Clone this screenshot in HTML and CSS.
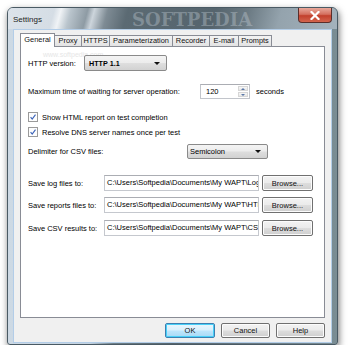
FILE: index.html
```html
<!DOCTYPE html>
<html>
<head>
<meta charset="utf-8">
<link rel="stylesheet" href="styles.css">
</head>
<body>
<div class="window">
	<div class="titlebar">
		<span class="title">Settings</span>
		<span class="watermark">SOFTPEDIA</span>
		<div class="close">
			<svg width="10" height="9" viewBox="0 0 10 9"><path d="M1.5 1 L8.5 8 M8.5 1 L1.5 8" stroke="#fff" stroke-width="2.2" stroke-linecap="square"/></svg>
		</div>
	</div>
	<div class="client">
		<ul class="tabs">
			<li class="tab active w-general">General</li>
			<li class="tab w-proxy">Proxy</li>
			<li class="tab w-https">HTTPS</li>
			<li class="tab w-param">Parameterization</li>
			<li class="tab w-rec">Recorder</li>
			<li class="tab w-mail">E-mail</li>
			<li class="tab w-prompts">Prompts</li>
		</ul>
		<div class="panel">
			<span class="site-mark">www.softpedia.com</span>
			<div class="row r-http">
				<span class="label l-http">HTTP version:</span>
				<div class="combo c-http"><span>HTTP 1.1</span><i class="arrow"></i></div>
			</div>
			<div class="row r-time">
				<span class="label l-time">Maximum time of waiting for server operation:</span>
				<div class="spin">
					<span class="spin-value">120</span>
					<div class="spin-btns">
						<i class="up"></i>
						<i class="down"></i>
					</div>
				</div>
				<span class="unit">seconds</span>
			</div>
			<div class="row check r-cb1">
				<svg class="cb" width="10" height="10" viewBox="0 0 10 10"><rect x="0.5" y="0.5" width="9" height="9" fill="#fdfdfd" stroke="#9a9a9a"/><path d="M2.6 5.2 L4.2 7.1 L7.5 2.7" fill="none" stroke="#3a62b8" stroke-width="1.1"/></svg>
				<span>Show HTML report on test completion</span>
			</div>
			<div class="row check r-cb2">
				<svg class="cb" width="10" height="10" viewBox="0 0 10 10"><rect x="0.5" y="0.5" width="9" height="9" fill="#fdfdfd" stroke="#9a9a9a"/><path d="M2.6 5.2 L4.2 7.1 L7.5 2.7" fill="none" stroke="#3a62b8" stroke-width="1.1"/></svg>
				<span>Resolve DNS server names once per test</span>
			</div>
			<div class="row r-delim">
				<span class="label l-delim">Delimiter for CSV files:</span>
				<div class="combo c-delim"><span>Semicolon</span><i class="arrow"></i></div>
			</div>
			<div class="row r-log">
				<span class="label l-save">Save log files to:</span>
				<div class="path">C:\Users\Softpedia\Documents\My WAPT\Log</div>
				<div class="btn browse">Browse...</div>
			</div>
			<div class="row r-rep">
				<span class="label l-save">Save reports files to:</span>
				<div class="path">C:\Users\Softpedia\Documents\My WAPT\HTM</div>
				<div class="btn browse">Browse...</div>
			</div>
			<div class="row r-csv">
				<span class="label l-save">Save CSV results to:</span>
				<div class="path">C:\Users\Softpedia\Documents\My WAPT\CSV</div>
				<div class="btn browse">Browse...</div>
			</div>
		</div>
		<div class="buttons">
			<div class="btn dlg default">OK</div>
			<div class="btn dlg">Cancel</div>
			<div class="btn dlg">Help</div>
		</div>
	</div>
</div>
</body>
</html>
```

FILE: styles.css
```css
* {
	margin: 0;
	padding: 0;
	box-sizing: border-box;
}

body {
	background: #fff;
	font-family: "Liberation Sans", Arial, sans-serif;
	font-size: 7.5px;
	color: #000;
}

.window {
	margin: 7px 0 0 7px;
	width: 331px;
	height: 338px;
	padding: 0 5px 2px 5px;
	border: 1px solid #4a5a64;
	border-radius: 6px 6px 3px 3px;
	background: linear-gradient(90deg, #cdd9e4 0%, #c4d3e0 25%, #6f8088 32%, #56656d 50%, #6c7c84 75%, #7a8d94 100%);
	box-shadow: 1px 3px 7px rgba(0, 0, 0, 0.55);
	position: relative;
}

.titlebar {
	height: 21px;
	display: flex;
	align-items: center;
	margin: 0 -5px;
	padding-left: 5px;
	border-radius: 5px 5px 0 0;
	background: linear-gradient(105deg, #dce3ea 0%, #d5dde5 14%, #f0f3f6 16%, #b9c4cc 19%, #8e9ba4 24%, #cdd5dc 26%, #7e8b94 30%, #5b6a73 36%, #55646d 62%, #6b7a83 72%, #94a3ad 82%, #a4b2bc 100%);
	position: relative;
	overflow: hidden;
}

.title {
	font-size: 8px;
	color: #1d1d1d;
	flex: 1;
	margin-top: 1px;
}

.watermark {
	position: absolute;
	left: 124px;
	top: 1px;
	font-family: "DejaVu Serif", serif;
	font-weight: bold;
	font-size: 18px;
	line-height: 21px;
	color: rgba(205, 214, 222, 0.35);
}

.close {
	width: 34px;
	height: 15px;
	margin: 0 5px auto 0;
	border: 1px solid #5b2e2a;
	border-top: none;
	border-radius: 0 0 4px 4px;
	background: linear-gradient(180deg, #e9a99b 0%, #d4705f 45%, #c2402c 55%, #d3654e 100%);
	display: flex;
	align-items: center;
	justify-content: center;
	position: relative;
	z-index: 1;
}

.client {
	height: 314px;
	border: 1px solid #b3cde8;
	background: #f0f0f0;
	padding: 3px 6px 4px 6px;
	display: flex;
	flex-direction: column;
}

.tabs {
	list-style-type: none;
	display: flex;
	align-items: flex-end;
	height: 13px;
	position: relative;
	z-index: 1;
}

.tab {
	height: 11px;
	border: 1px solid #898c95;
	border-bottom: none;
	margin-right: -1px;
	background: linear-gradient(180deg, #f3f3f3, #e3e3e3);
	text-align: center;
	line-height: 10px;
	color: #111;
	font-size: 7.4px;
}

.tab.active {
	height: 14px;
	margin-bottom: -1px;
	background: #fff;
	line-height: 12px;
	position: relative;
	z-index: 2;
}

.w-general { width: 35px; }
.w-proxy { width: 28px; }
.w-https { width: 29px; }
.w-param { width: 64px; }
.w-rec { width: 38px; }
.w-mail { width: 30px; }
.w-prompts { width: 34px; }

.panel {
	height: 272px;
	border: 1px solid #898c95;
	background: #fff;
	padding: 0 0 0 7px;
	position: relative;
}

.site-mark {
	position: absolute;
	left: 22px;
	top: 4px;
	color: #e6e6e6;
	font-size: 7px;
}

.row {
	display: flex;
	align-items: center;
	position: relative;
}

.label {
	flex: none;
}

.l-http { width: 56px; }
.l-time { width: 172px; }
.l-delim { width: 159px; }
.l-save { width: 76px; }

.r-http { margin-top: 8px; height: 16px; }
.r-time { margin-top: 13px; height: 15px; }
.r-cb1 { margin-top: 12px; height: 12px; }
.r-cb2 { margin-top: 3px; height: 12px; }
.r-delim { margin-top: 6px; height: 15px; }
.r-log { margin-top: 16px; height: 16px; }
.r-rep { margin-top: 6px; height: 16px; }
.r-csv { margin-top: 7px; height: 16px; }

.combo {
	height: 100%;
	border: 1px solid #8a8a8a;
	border-radius: 2px;
	background: linear-gradient(180deg, #f4f4f4 0%, #ececec 48%, #dedede 52%, #d2d2d2 100%);
	display: flex;
	align-items: center;
	padding: 0 6px 0 4px;
}

.combo span {
	flex: 1;
}

.c-http {
	width: 83px;
	font-weight: bold;
	font-size: 7.2px;
}

.c-delim {
	width: 81px;
	padding-left: 2px;
}

.arrow {
	width: 0;
	height: 0;
	border-left: 3px solid transparent;
	border-right: 3px solid transparent;
	border-top: 3px solid #111;
}

.spin {
	width: 50px;
	height: 100%;
	border: 1px solid #c2c5cb;
	border-top-color: #abadb3;
	display: flex;
	background: #fff;
}

.spin-value {
	flex: 1;
	padding-left: 5px;
	line-height: 13px;
}

.spin-btns {
	width: 11px;
	display: flex;
	flex-direction: column;
	gap: 1px;
	padding: 1px 1px 1px 0;
}

.spin-btns i {
	flex: 1;
	border: 1px solid #d6d6d6;
	background: linear-gradient(180deg, #f7f7f7, #e6e6e6);
	display: flex;
	align-items: center;
	justify-content: center;
}

.spin-btns i::after {
	content: "";
	border-left: 2px solid transparent;
	border-right: 2px solid transparent;
}

.spin-btns .up::after {
	border-bottom: 2px solid #5b78a8;
}

.spin-btns .down::after {
	border-top: 2px solid #5b78a8;
}

.unit {
	margin-left: 6px;
}

.check .cb {
	margin-right: 4px;
	flex: none;
}

.path {
	width: 155px;
	height: 100%;
	border: 1px solid #c5c8ce;
	border-top-color: #abadb3;
	background: #fff;
	padding: 0 2px;
	line-height: 14px;
	white-space: nowrap;
	overflow: hidden;
}

.btn {
	height: 100%;
	border: 1px solid #707070;
	border-radius: 2px;
	background: linear-gradient(180deg, #f3f3f3 0%, #ebebeb 48%, #dddddd 52%, #cfcfcf 100%);
	display: flex;
	align-items: center;
	justify-content: center;
	color: #111;
}

.browse {
	width: 51px;
	margin-left: 3px;
	box-shadow: inset 0 0 0 1px #fcfcfc;
}

.buttons {
	margin-top: 5px;
	height: 15px;
	display: flex;
	justify-content: flex-end;
	gap: 6px;
}

.dlg {
	width: 49px;
	box-shadow: inset 0 0 0 1px #fcfcfc;
}

.dlg.default {
	width: 50px;
	border-color: #3c7fb1;
	background: linear-gradient(180deg, #eaf6fd 0%, #d9f0fc 48%, #bee6fd 52%, #a7d9f5 100%);
	box-shadow: inset 0 0 0 1px #48d0f8;
}
```
